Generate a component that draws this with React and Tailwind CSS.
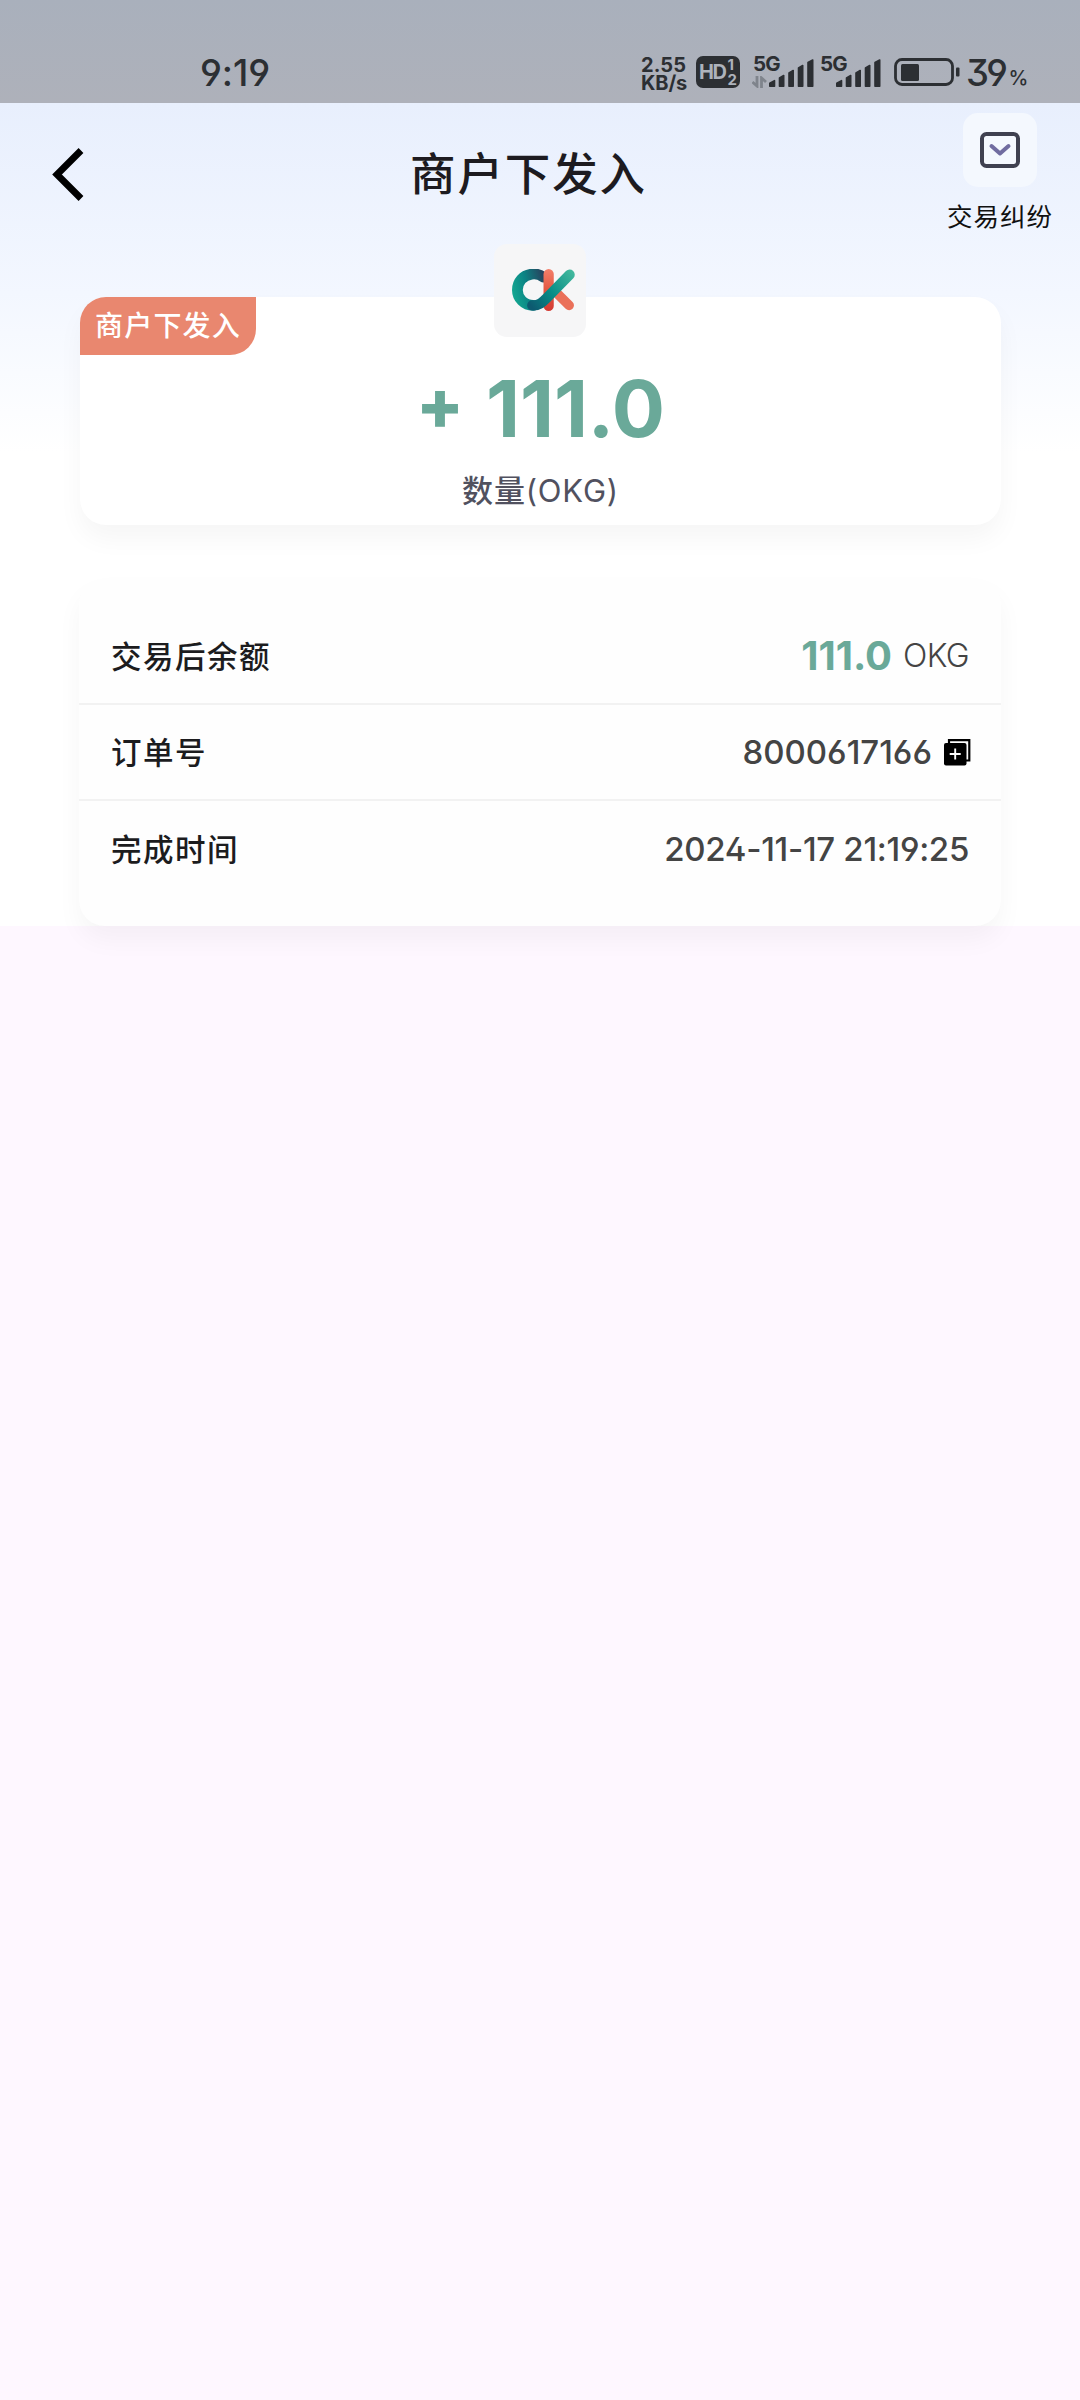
import React from "react";

const details = [
  { label: "交易后余额", kind: "balance", value: "111.0", unit: "OKG" },
  { label: "订单号", kind: "order", value: "8000617166" },
  { label: "完成时间", kind: "time", value: "2024-11-17 21:19:25" },
];

function SignalBars() {
  return (
    <svg width="46" height="30" viewBox="0 0 46 30" fill="#2c2f33" stroke="#2c2f33" strokeWidth="1.600" strokeLinejoin="round">
      <path d="M0.800 28.200v-3l4.700-2.500v5.500zM10.500 28.200V20l4.200-2.500v10.700zM20 28.200V15l4.200-2.500v15.700zM29.500 28.200V10l4.200-2.500v20.700zM39 28.200V4.500l4.700-2.500v26.200z" />
    </svg>
  );
}

function Signal({ data }) {
  return (
    <div className="relative h-8 w-[62px]">
      <span className="absolute left-0 -top-[2px] text-[20.500px] leading-5 font-bold tracking-[-0.8px]">5G</span>
      {data && (
        <svg className="absolute -left-[1px] top-[20px]" width="15" height="12" viewBox="0 0 15 12" fill="none" stroke="#7f848c" strokeWidth="2.800">
          <path d="M5 0v10L0.500 6M9.500 12V2l4.500 4" />
        </svg>
      )}
      <div className="absolute left-4 top-[2px]">
        <SignalBars />
      </div>
    </div>
  );
}

function StatusBar() {
  return (
    <div className="flex h-[103px] items-start bg-linear-to-b from-[#a9b0bc] to-[#aeb1ba] text-[#2c2f33]">
      <span className="ml-[200px] mt-[54px] w-[441px] text-[37px] leading-[38px] font-medium tracking-[-0.1px]">9:19</span>
      <div className="mt-[56px] w-[55px] text-[20px] leading-[18px] font-bold">
        <div className="tracking-[0.1px]">2.55</div>
        <div className="tracking-[-0.1px]">KB/s</div>
      </div>
      <div className="mt-[56px] flex h-8 w-[44px] rounded-[7px] bg-[#2c2f33] pl-[3px] text-[#adb2bb]">
        <span className="text-[20px] leading-8 font-bold tracking-[-1.4px]">HD</span>
        <span className="pl-[2px] pt-[1px] text-[15px] leading-[15px] font-bold">
          1<br />2
        </span>
      </div>
      <div className="ml-[13px] mt-[56px] flex gap-[5px]">
        <Signal data />
        <Signal />
      </div>
      <svg className="ml-[12px] mt-[58px]" width="66" height="28" viewBox="0 0 66 28">
        <rect x="1.500" y="1.500" width="57" height="25" rx="6.500" fill="none" stroke="#2c2f33" strokeWidth="2.800" />
        <rect x="7" y="6" width="18" height="17" rx="1.500" fill="#2c2f33" />
        <rect x="62" y="9.500" width="3.500" height="9" rx="1" fill="#2c2f33" />
      </svg>
      <span className="ml-[6px] mt-[54px] text-[36.500px] leading-[38px] font-medium tracking-[-2.600px]">39</span>
      <span className="ml-[3px] mt-[66px] text-[20px] leading-[24px] font-medium">%</span>
    </div>
  );
}

function Header() {
  return (
    <header className="relative flex h-[141px] items-start">
      <svg className="ml-[52px] mt-[45px]" width="32" height="53" viewBox="0 0 32 53" fill="none" stroke="#000" strokeWidth="6.800">
        <path d="M29 2.500L5 26.500L29 50.500" />
      </svg>
      <h1 className="ml-[326px] mt-[43px] w-[240px] whitespace-nowrap text-[45.500px] leading-[58px] font-medium tracking-[1.900px] text-[#1d1b20]">商户下发入</h1>
      <div className="ml-[278px] mt-[10px] flex w-[144px] flex-col items-center">
        <div className="flex size-[74px] items-center justify-center rounded-[15px] bg-[#f4f8fe]">
          <svg width="40" height="36" viewBox="0 0 40 36" fill="none">
            <rect x="2" y="2" width="36" height="32" rx="4.500" stroke="#3f4150" strokeWidth="4" />
            <path d="M11.500 14l8.500 7.500l8.500-7.500" stroke="#706ca0" strokeWidth="4" strokeLinecap="round" strokeLinejoin="round" />
          </svg>
        </div>
        <span className="mt-[13px] whitespace-nowrap text-[25.500px] leading-[34px] tracking-[1px] text-[#111]">交易纠纷</span>
      </div>
    </header>
  );
}

function CoinLogo() {
  return (
    <svg width="64" height="42" viewBox="-0.500 0.500 62 41" fill="none" strokeLinecap="round">
      <defs>
        <linearGradient id="ring" x1="0" y1="24" x2="34" y2="16" gradientUnits="userSpaceOnUse">
          <stop stopColor="#14a891" />
          <stop offset="0.450" stopColor="#0b8485" />
          <stop offset="1" stopColor="#28405c" />
        </linearGradient>
        <linearGradient id="arm" x1="20" y1="38" x2="60" y2="4" gradientUnits="userSpaceOnUse">
          <stop stopColor="#0d5a70" />
          <stop offset="0.450" stopColor="#078d87" />
          <stop offset="1" stopColor="#42b89d" />
        </linearGradient>
        <linearGradient id="stem" x1="36" y1="0" x2="36" y2="41" gradientUnits="userSpaceOnUse">
          <stop stopColor="#f4806b" />
          <stop offset="0.550" stopColor="#e2543f" />
          <stop offset="1" stopColor="#d43b34" />
        </linearGradient>
      </defs>
      <path d="M44 24L56 36" stroke="#ea7059" strokeWidth="9.500" />
      <path d="M31 8.500C27 5.500 23 5 19.500 5.500C11 6.500 5.500 13 5.500 21S12 36 21 36" stroke="url(#ring)" strokeWidth="10.500" />
      <path d="M36 5.500V36.500" stroke="url(#stem)" strokeWidth="10" />
      <path d="M20 36C27 36.500 31 32 35 28L56.500 6" stroke="url(#arm)" strokeWidth="10" />
    </svg>
  );
}

function AmountCard() {
  return (
    <section className="relative ml-[80px] mr-[79px] mt-[53px] flex h-[228px] flex-col items-center rounded-[26px] bg-white shadow-[0_14px_26px_rgba(0,0,0,0.04)]">
      <span className="absolute left-0 top-0 h-[58px] w-[176px] rounded-tl-[26px] rounded-br-[26px] bg-[#e9876f] pl-[15px] text-[28px] leading-[58px] font-medium tracking-[1.200px] whitespace-nowrap text-white">
        商户下发入
      </span>
      <div className="absolute -top-[53px] left-[414px] flex h-[93px] w-[92px] items-center justify-center rounded-[13px] bg-[#f6f6f7] pb-[2px] pl-[5px]">
        <CoinLogo />
      </div>
      <div className="mt-[66px] flex text-[79px] leading-[90px] text-[#6aa999]">
        <span className="-mt-[4px] w-[70px] text-[70px] font-extrabold">+</span>
        <span className="font-bold tracking-[-0.1px]">111.0</span>
      </div>
      <div className="mt-[16px] text-[31px] leading-[44px] font-medium tracking-[0.8px] text-[#51515f]">
        数量<span className="font-normal">(OKG)</span>
      </div>
    </section>
  );
}

function CopyIcon() {
  return (
    <svg className="ml-[12px] -mr-[2px]" width="27" height="27" viewBox="0 0 27 27">
      <path d="M5 4V1.200h20.300v20.300H22" fill="none" stroke="#000" strokeWidth="2.200" />
      <rect x="0" y="4" width="22.500" height="22.500" rx="2" fill="#000" />
      <path d="M11.200 9.500v11M5.700 15h11" stroke="#fff" strokeWidth="1.900" />
    </svg>
  );
}

function DetailRow({ item }) {
  return (
    <div className="flex h-24 items-center justify-between pl-[32px] pr-[32px]">
      <span className="pt-px text-[30.500px] font-medium tracking-[1.500px] text-[#1c1c1e]">{item.label}</span>
      {item.kind === "balance" && (
        <span className="flex items-center">
          <span className="text-[40px] font-bold text-[#6aa999]">{item.value}</span>
          <span className="ml-[11px] text-[32px] font-light tracking-[-0.6px] text-[#444]">{item.unit}</span>
        </span>
      )}
      {item.kind === "order" && (
        <span className="flex items-center pt-px text-[33px] font-medium text-[#444]">
          {item.value}
          <CopyIcon />
        </span>
      )}
      {item.kind === "time" && (
        <span className="pt-px text-[33px] font-medium tracking-[-0.3px] text-[#444]">{item.value}</span>
      )}
    </div>
  );
}

export default function App() {
  return (
    <div className="h-[2400px] w-[1080px] overflow-hidden bg-[#fef7ff] font-['Inter','Noto_Sans_CJK_SC',sans-serif] [font-feature-settings:'ss01']">
      <StatusBar />
      <main className="h-[823px] bg-linear-to-b from-[#e8effd] via-[#f3f7ff] via-[190px] to-white to-[350px]">
        <Header />
        <AmountCard />
        <section className="mx-[79px] mt-[54px] h-[347px] divide-y-2 divide-[#f2f2f2] rounded-[26px] bg-[#fefefe] pt-[30px] shadow-[0_14px_26px_rgba(0,0,0,0.04)]">
          {details.map((item) => (
            <DetailRow key={item.label} item={item} />
          ))}
        </section>
      </main>
    </div>
  );
}
